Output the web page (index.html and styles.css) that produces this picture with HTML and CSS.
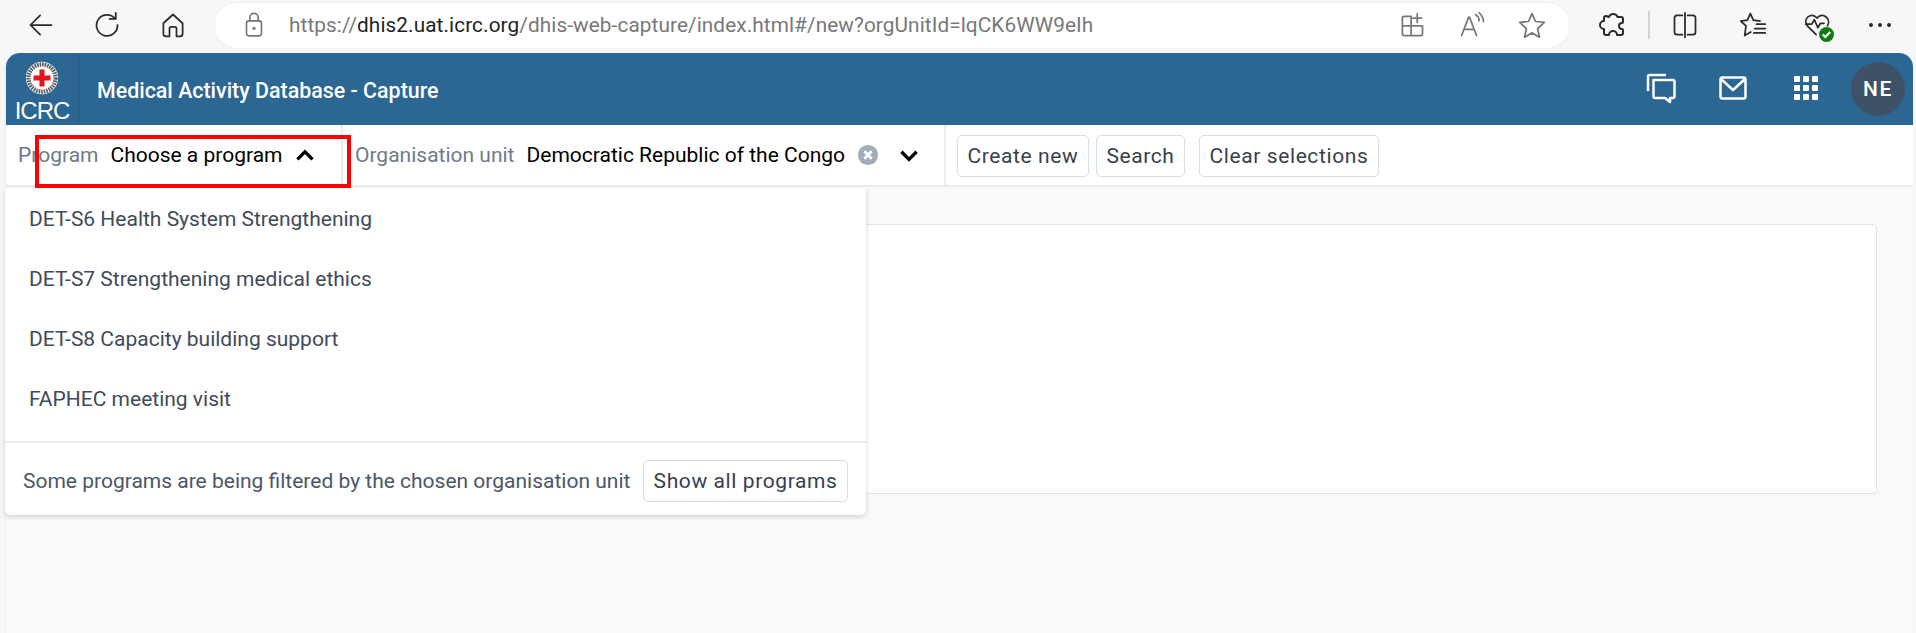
FILE: index.html
```html
<!DOCTYPE html>
<html lang="en">
<head>
    <meta charset="UTF-8">
    <title>Medical Activity Database - Capture</title>
    <link rel="stylesheet" href="styles.css">
</head>
<body>
    <!-- browser toolbar -->
    <div class="browser">
        <div class="nav-icons">
            <svg class="ico" viewBox="0 0 32 32"><path d="M28 16H4M15 5 4 16l11 11"/></svg>
            <svg class="ico" viewBox="0 0 32 32"><path d="M25 8.500A12 12 0 1 0 28 16M26 2v7h-7"/></svg>
            <svg class="ico" viewBox="0 0 32 32"><path d="M5 14 16 4l11 10v12a3 3 0 0 1-3 3h-4v-9a2 2 0 0 0-2-2h-4a2 2 0 0 0-2 2v9H8a3 3 0 0 1-3-3z"/></svg>
        </div>
        <div class="address">
            <svg class="ico small grey lock" viewBox="0 0 24 32"><rect x="3" y="11" width="18" height="18" rx="3"/><path d="M7 11V7a5 5 0 0 1 10 0v4"/><circle cx="12" cy="20" r="1"/></svg>
            <span class="url">https://<b>dhis2.uat.icrc.org</b>/dhis-web-capture/index.html#/new?orgUnitId=lqCK6WW9eIh</span>
            <svg class="ico grey addr-a" viewBox="0 0 32 32"><path d="M15 6H7a2 2 0 0 0-2 2v18a2 2 0 0 0 2 2h19a2 2 0 0 0 2-2v-9H5M15 6v22M22 3v10M17 8h10"/></svg>
            <svg class="ico grey addr-b" viewBox="0 0 32 32"><path d="M3 28 11 7h1l8 21M6 21h11M19 4c3 2 4 4 4 7M23 2c3 3 5 5 5 10"/></svg>
            <svg class="ico grey addr-c" viewBox="0 0 32 32"><path d="m16 3 4 9 10 1-7.500 7 2 10-8.500-5-8.500 5 2-10L2 13l10-1z"/></svg>
        </div>
        <div class="tool-icons">
            <svg class="ico" viewBox="3 2 26 28"><path d="M12 8a4.500 4.500 0 0 1 8.500 0h3.500a2 2 0 0 1 2 2v3a1 1 0 0 1-1 1 3 3 0 0 0 0 6 1 1 0 0 1 1 1v3a2 2 0 0 1-2 2h-4a4 4 0 0 0-8 0H9a2 2 0 0 1-2-2v-4a4 4 0 0 1 0-8v-3a2 2 0 0 1 2-2z"/></svg>
            <i class="tool-sep"></i>
            <svg class="ico split" viewBox="0 0 32 32"><path d="M13 5H7a3 3 0 0 0-3 3v16a3 3 0 0 0 3 3h6M19 5h6a3 3 0 0 1 3 3v16a3 3 0 0 1-3 3h-6M16 2v28"/></svg>
            <svg class="ico favs" viewBox="0 0 32 32"><path d="m13 3 3.400 7.500 7.600 1M9.600 10.500 2 11.500 8 17 6.500 28l7-4M13 3 9.600 10.500M20 15h10M18 20h12M17 25h13"/></svg>
            <span class="heart">
                <svg class="ico" viewBox="0 0 32 32"><path d="M15 27 5 17C-1 9 10 0 16 8c6-8 17 1 12 9M3 15h7l3-5 4 9 3-5h4"/></svg>
                <span class="heart-ok"><svg viewBox="0 0 12 12"><path d="m3 6 2 2 4-4"/></svg></span>
            </span>
            <span class="dots"><i></i><i></i><i></i></span>
        </div>
    </div>

    <div class="app">
        <header class="topbar">
            <div class="logo">
                <svg viewBox="0 0 40 40" width="34" height="34">
                    <circle cx="20" cy="20" r="19" fill="#fff"/>
                    <circle cx="20" cy="20" r="16" fill="none" stroke="#5c5f62" stroke-width="5" stroke-dasharray="2 1"/>
                    <circle cx="20" cy="20" r="12.500" fill="#fff"/>
                    <path d="M17 10h6v7h7v6h-7v7h-6v-7h-7v-6h7z" fill="#e3161b"/>
                </svg>
                <span class="logo-text">ICRC</span>
            </div>
            <div class="app-title">Medical Activity Database - Capture</div>
            <div class="top-actions">
                <svg class="top-ico" viewBox="0 0 32 32"><path d="M3 19V4.500A1.500 1.500 0 0 1 4.500 3H21"/><path d="M8.500 8H28a1.500 1.500 0 0 1 1.500 1.500v15a1.500 1.500 0 0 1-1.500 1.500h-3v4l-5-4H10a1.500 1.500 0 0 1-1.500-1.500z"/></svg>
                <svg class="top-ico" viewBox="0 0 32 32"><rect x="3.500" y="5.500" width="25" height="21" rx="2"/><path d="m4 7 12 11L28 7"/></svg>
                <span class="apps"><i></i><i></i><i></i><i></i><i></i><i></i><i></i><i></i><i></i></span>
                <span class="avatar">NE</span>
            </div>
        </header>

        <div class="selector">
            <div class="sel-program">
                <span class="sel-label">Program</span>
                <span class="sel-value">Choose a program</span>
                <svg class="chev" viewBox="0 0 24 24"><path d="m5 16 7-7 7 7"/></svg>
            </div>
            <div class="sel-org">
                <span class="sel-label">Organisation unit</span>
                <span class="sel-value">Democratic Republic of the Congo</span>
                <svg class="clear" viewBox="0 0 24 24"><circle cx="12" cy="12" r="11"/><path d="m8 8 8 8M16 8l-8 8"/></svg>
                <svg class="chev" viewBox="0 0 24 24"><path d="m5 9 7 7 7-7"/></svg>
            </div>
            <div class="sel-actions">
                <button class="btn">Create new</button>
                <button class="btn">Search</button>
                <button class="btn btn-clear">Clear selections</button>
            </div>
        </div>

        <main class="content">
            <div class="card"></div>
        </main>

        <div class="menu">
            <ul class="menu-list">
                <li>DET-S6 Health System Strengthening</li>
                <li>DET-S7 Strengthening medical ethics</li>
                <li>DET-S8 Capacity building support</li>
                <li>FAPHEC meeting visit</li>
            </ul>
            <div class="menu-foot">
                <span>Some programs are being filtered by the chosen organisation unit</span>
                <button class="btn">Show all programs</button>
            </div>
        </div>

        <div class="redbox"></div>
    </div>
</body>
</html>
```

FILE: styles.css
```css
* {
    box-sizing: border-box;
}
html, body {
    height: 100%;
}
body {
    margin: 0;
    background: #f7f7f7;
    font-family: Roboto, "Liberation Sans", sans-serif;
    color: #212934;
    overflow: hidden;
    display: flex;
    flex-direction: column;
}

/* browser toolbar */
.browser {
    height: 53px;
    display: flex;
    align-items: center;
    padding-bottom: 3px;
    flex: none;
}
.ico {
    width: 28px;
    height: 28px;
    fill: none;
    stroke: #2b2b2b;
    stroke-width: 2;
    stroke-linejoin: round;
    stroke-linecap: round;
    flex: none;
}
.ico.grey {
    stroke: #77787a;
}
.ico.small {
    width: 20px;
}
.nav-icons {
    width: 215px;
    padding-left: 27px;
    display: flex;
    gap: 38px;
    flex: none;
}
.address {
    width: 1354px;
    height: 45px;
    background: #fff;
    border-radius: 23px;
    display: flex;
    align-items: center;
    padding-left: 29px;
    box-shadow: 0 0 3px rgba(0, 0, 0, 0.06);
    flex: none;
}
.url {
    margin-left: 25px;
    width: 1109px;
    font-size: 20.750px;
    color: #77787a;
    white-space: nowrap;
    letter-spacing: 0.1px;
}
.url b {
    font-weight: 400;
    color: #1f1f1f;
}
.addr-a {
    margin-right: 33px;
}
.addr-b {
    margin-right: 31px;
}
.tool-icons {
    flex: 1;
    display: flex;
    align-items: center;
    padding-left: 30px;
}
.tool-sep {
    width: 2px;
    height: 28px;
    background: #d4d4d4;
    margin: 0 21px;
}
.favs {
    margin-left: 40px;
}
.heart {
    position: relative;
    margin-left: 36px;
    display: flex;
}
.heart-ok {
    position: absolute;
    right: -3px;
    bottom: -3px;
    width: 15px;
    height: 15px;
    border-radius: 50%;
    background: #107c10;
}
.heart-ok svg {
    display: block;
    fill: none;
    stroke: #fff;
    stroke-width: 1.800;
}
.dots {
    margin-left: 38px;
    display: flex;
    gap: 5px;
}
.dots i {
    width: 4px;
    height: 4px;
    border-radius: 50%;
    background: #2b2b2b;
}

/* app window */
.app {
    position: relative;
    flex: 1;
    margin: 0 3px 0 5px;
    background: #f9f9f9;
    border-left: 1px solid #e8edf2;
    border-radius: 14px 14px 0 0;
    display: flex;
    flex-direction: column;
    min-height: 0;
}
.topbar {
    height: 72px;
    background: #2c6693;
    border-radius: 14px 14px 0 0;
    display: flex;
    align-items: stretch;
    color: #fff;
    flex: none;
}
.logo {
    width: 73px;
    border-right: 1px solid #28597f;
    display: flex;
    flex-direction: column;
    align-items: center;
    padding-top: 8px;
}
.logo svg {
    display: block;
}
.logo-text {
    font-family: "Liberation Sans", sans-serif;
    font-size: 24px;
    letter-spacing: -1px;
    line-height: 27px;
    margin-top: 2px;
}
.app-title {
    margin-left: 18px;
    align-self: center;
    font-size: 21.400px;
    font-weight: 500;
    margin-top: 2px;
}
.top-actions {
    margin-left: auto;
    display: flex;
    align-items: center;
    padding-right: 8px;
}
.top-ico {
    width: 32px;
    height: 32px;
    fill: none;
    stroke: #fff;
    stroke-width: 2.500;
    stroke-linejoin: round;
    margin-right: 40px;
    margin-top: -2px;
}
.top-ico + .top-ico {
    margin-right: 45px;
}
.apps {
    display: grid;
    grid-template-columns: repeat(3, 6px);
    gap: 3px;
    margin-right: 33px;
    margin-top: -2px;
}
.apps i {
    height: 6px;
    background: #fff;
    border-radius: 1px;
}
.avatar {
    width: 54px;
    height: 54px;
    border-radius: 50%;
    background: #3e5267;
    display: flex;
    align-items: center;
    justify-content: center;
    font-size: 21px;
    font-weight: 500;
    letter-spacing: 1.500px;
}

/* program / org unit selector */
.selector {
    height: 62px;
    background: #fff;
    border-bottom: 2px solid #e8edf2;
    display: flex;
    flex: none;
}
.sel-program, .sel-org {
    display: flex;
    align-items: center;
    height: 60px;
    padding-bottom: 1px;
    font-size: 21px;
    border-right: 2px solid #e8edf2;
    white-space: nowrap;
}
.sel-program {
    width: 337px;
    padding-left: 12px;
}
.sel-org {
    width: 603px;
    padding-left: 12px;
}
.sel-label {
    color: #6e7a8a;
    margin-right: 12px;
}
.sel-value {
    color: #000;
}
.chev {
    width: 26px;
    height: 26px;
    fill: none;
    stroke: #000;
    stroke-width: 3;
}
.sel-program .chev {
    margin-left: 9px;
}
.clear {
    width: 22px;
    height: 22px;
    margin-left: 12px;
    margin-right: 17px;
}
.clear circle {
    fill: #a0adba;
}
.clear path {
    stroke: #fff;
    stroke-width: 3;
}
.sel-actions {
    display: flex;
    gap: 7px;
    padding: 10px 0 0 11px;
    align-items: flex-start;
}
.btn {
    height: 42px;
    padding: 0 9.500px;
    background: #fff;
    border: 1px solid #d5dde5;
    border-radius: 5px;
    font-family: Roboto, sans-serif;
    font-size: 21px;
    letter-spacing: 0.6px;
    color: #373f4c;
    white-space: nowrap;
}
.btn-clear {
    margin-left: 7px;
}

/* page behind the menu */
.content {
    flex: 1;
    padding: 37px 36px 0 24px;
}
.card {
    height: 270px;
    background: #fff;
    border: 1px solid #e0e5ea;
    border-radius: 4px;
}

/* dropdown menu */
.menu {
    position: absolute;
    top: 135px;
    left: -1px;
    width: 861px;
    height: 327px;
    background: #fff;
    border-radius: 0 0 5px 5px;
    box-shadow: 0 2px 5px rgba(33, 41, 52, 0.18);
    display: flex;
    flex-direction: column;
}
.menu-list {
    list-style: none;
    margin: 0;
    padding: 1px 0 0;
    height: 255px;
    border-bottom: 2px solid #e8edf2;
}
.menu-list li {
    height: 60px;
    line-height: 60px;
    padding-left: 24px;
    font-size: 21px;
    color: #404b5a;
}
.menu-foot {
    flex: 1;
    display: flex;
    align-items: center;
    justify-content: space-between;
    padding: 4px 18px 0;
    font-size: 21px;
    color: #4a5768;
}

/* annotation */
.redbox {
    position: absolute;
    left: 29px;
    top: 82px;
    width: 316px;
    height: 53px;
    border: 4px solid #f00;
}
```
